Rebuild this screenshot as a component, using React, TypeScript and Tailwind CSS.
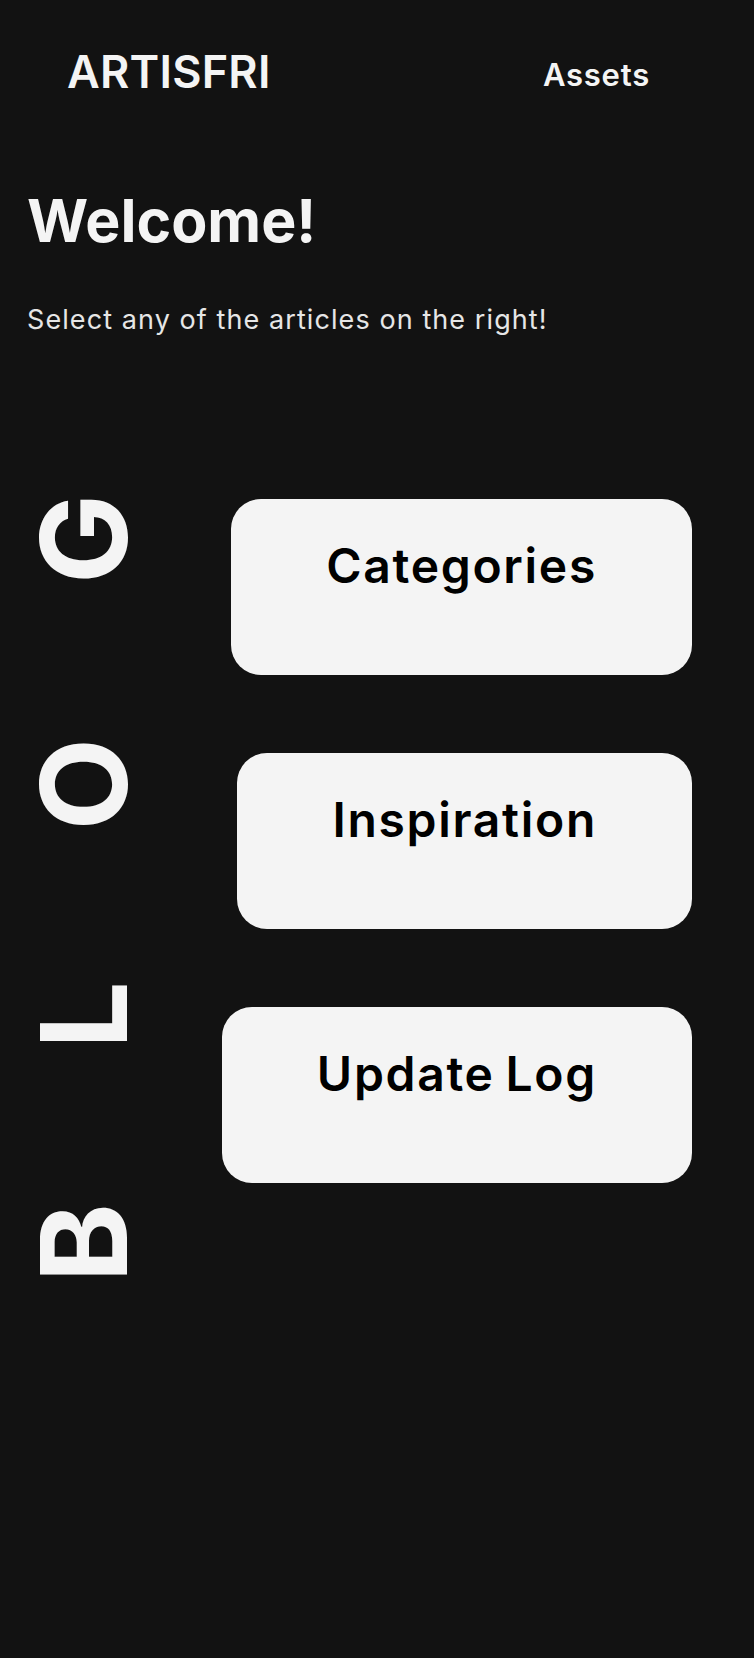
import React from "react";

const buttons = ["Categories", "Inspiration", "Update Log"];

export default function App() {
  return (
    <div
      className="min-h-screen w-full bg-[#121212] text-[#f4f4f4]"
      style={{ fontFamily: "Inter, 'Noto Sans', sans-serif" }}
    >
      <header className="flex items-start justify-between pl-[67px] pr-[104px] pt-[49px]">
        <div className="text-[45px] font-semibold leading-none tracking-[0.005em]">ARTISFRI</div>
        <nav className="mt-[10px] text-[31px] font-semibold leading-none tracking-[0.025em]">Assets</nav>
      </header>

      <section className="pl-[27px]">
        <h1 className="mt-[97px] text-[59px] font-bold leading-none">Welcome!</h1>
        <p className="mt-[56px] text-[27px] font-normal leading-none tracking-[0.04em] text-[#e6e6e6]">
          Select any of the articles on the right!
        </p>
      </section>

      <main className="flex items-start pl-[24px]">
        <div className="mt-[7px] rotate-180 text-[120px] font-bold leading-none tracking-[154px] [writing-mode:vertical-rl]">
          BLOG
        </div>
        <div className="mt-[166px] flex flex-1 flex-col items-end gap-[78px] pr-[62px]">
          {buttons.map((b) => (
            <button
              key={b}
              className="rounded-[30px] bg-[#f4f4f4] px-[95px] pb-[85px] pt-[43px] text-[48px] font-semibold leading-[48px] tracking-[1.7px] [word-spacing:-3px] text-black"
            >
              {b}
            </button>
          ))}
        </div>
      </main>
    </div>
  );
}
